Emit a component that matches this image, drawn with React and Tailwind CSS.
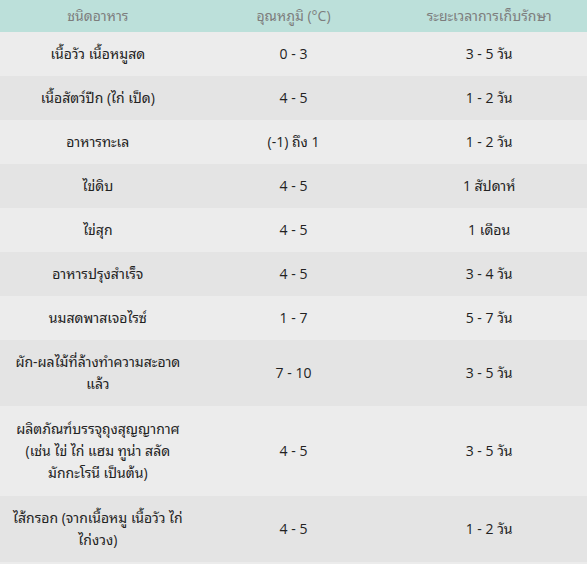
import React from "react";

const rows = [
  ["เนื้อวัว เนื้อหมูสด", "0 - 3", "3 - 5 วัน"],
  ["เนื้อสัตว์ปีก (ไก่ เป็ด)", "4 - 5", "1 - 2 วัน"],
  ["อาหารทะเล", "(-1) ถึง 1", "1 - 2 วัน"],
  ["ไข่ดิบ", "4 - 5", "1 สัปดาห์"],
  ["ไข่สุก", "4 - 5", "1 เดือน"],
  ["อาหารปรุงสำเร็จ", "4 - 5", "3 - 4 วัน"],
  ["นมสดพาสเจอไรซ์", "1 - 7", "5 - 7 วัน"],
  ["ผัก-ผลไม้ที่ล้างทำความสะอาดแล้ว", "7 - 10", "3 - 5 วัน"],
  ["ผลิตภัณฑ์บรรจุถุงสุญญากาศ (เช่น ไข่ ไก่ แฮม ทูน่า สลัด มักกะโรนี เป็นต้น)", "4 - 5", "3 - 5 วัน"],
  ["ไส้กรอก (จากเนื้อหมู เนื้อวัว ไก่ ไก่งวง)", "4 - 5", "1 - 2 วัน"],
];

export default function App() {
  return (
    <div
      className="w-[587px] h-[564px] overflow-hidden bg-[#ececec] text-[14px] text-[#222]"
      style={{ fontFamily: '"Open Sans", "Noto Sans Thai Looped", "Noto Looped Thai UI", Loma, Garuda, Tahoma, "Noto Sans Thai", sans-serif' }}
    >
      <div className="grid grid-cols-3 bg-[#bce0da] text-[#7d7d7d] text-center">
        <div className="py-[5px] leading-[22px] px-[10px]">ชนิดอาหาร</div>
        <div className="py-[5px] leading-[22px] px-[10px]">อุณหภูมิ (°C)</div>
        <div className="py-[5px] leading-[22px] px-[10px]">ระยะเวลาการเก็บรักษา</div>
      </div>
      {rows.map((r, i) => (
        <div
          key={i}
          className={`grid grid-cols-3 text-center items-center ${i % 2 === 0 ? "bg-[#ececec]" : "bg-[#e4e4e4]"} ${i === 8 ? "py-px" : ""}`}
        >
          <div className="py-[11px] leading-[22px] px-[12px]">{r[0]}</div>
          <div className="py-[11px] leading-[22px] px-[10px]">{r[1]}</div>
          <div className="py-[11px] leading-[22px] px-[10px]">{r[2]}</div>
        </div>
      ))}
    </div>
  );
}
